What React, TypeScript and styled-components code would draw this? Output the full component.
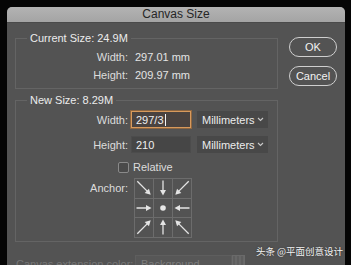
import React from "react"
import styled, { createGlobalStyle } from "styled-components"

const GlobalStyle = createGlobalStyle`
  html, body {
    margin: 0;
    padding: 0;
    background: #050505;
    overflow: hidden;
  }
  body {
    font-family: "Liberation Sans", Arial, sans-serif;
    font-size: 11px;
  }
`

const Screen = styled.div`
  width: 351px;
  height: 265px;
  padding: 7px 6px 0 7px;
  box-sizing: border-box;
  position: relative;
  overflow: hidden;
`

const Window = styled.div`
  width: 338px;
  height: 270px;
  background: #535353;
  border-radius: 5px 5px 0 0;
  overflow: hidden;
`

const TitleBar = styled.div`
  height: 15px;
  background: linear-gradient(#b3b3b3, #a4a4a4);
  color: #262626;
  font-size: 12px;
  line-height: 15px;
  text-align: center;
  border-bottom: 1px solid #4a4a4a;
`

const Body = styled.div`
  display: flex;
  gap: 11px;
  padding: 0 8px 0 8px;
`

const Main = styled.div`
  width: 263px;
  display: flex;
  flex-direction: column;
`

const Side = styled.div`
  display: flex;
  flex-direction: column;
  gap: 9px;
  padding-top: 14px;
`

const Group = styled.fieldset<{ $top: number }>`
  margin: ${(p) => p.$top}px 0 0 0;
  padding: 0;
  border: 1px solid #646464;
  min-width: 0;
`

const Legend = styled.legend`
  margin-left: 11px;
  padding: 0 3px;
  color: #ececec;
  line-height: 13px;
  font-size: 11px;
`

const Rows = styled.div<{ $pt: number; $pb: number }>`
  display: flex;
  flex-direction: column;
  padding: ${(p) => p.$pt}px 0 ${(p) => p.$pb}px 0;
`

const Row = styled.div<{ $h: number; $mt?: number }>`
  display: flex;
  align-items: center;
  height: ${(p) => p.$h}px;
  margin-top: ${(p) => p.$mt ?? 0}px;
`

const Label = styled.div<{ $dim?: boolean }>`
  width: 112px;
  text-align: right;
  white-space: nowrap;
  color: ${(p) => (p.$dim ? "#767676" : "#dcdcdc")};
  flex-shrink: 0;
`

const Value = styled.div`
  margin-left: 7px;
  color: #e4e4e4;
`

const Field = styled.div<{ $focus?: boolean }>`
  margin-left: 3px;
  width: 60px;
  height: 17px;
  box-sizing: border-box;
  padding-left: 4px;
  display: flex;
  align-items: center;
  color: #f0f0f0;
  background: ${(p) => (p.$focus ? "#4a4340" : "#464646")};
  border: 1px solid ${(p) => (p.$focus ? "#d89a5c" : "#4c4c4c")};
  box-shadow: ${(p) => (p.$focus ? "0 0 0 1px #8e6640" : "none")};
`

const Caret = styled.span`
  display: inline-block;
  width: 1px;
  height: 12px;
  background: #f4f4f4;
  margin-left: 1px;
`

const Select = styled.div`
  margin-left: 6px;
  width: 71px;
  height: 17px;
  box-sizing: border-box;
  padding: 0 4px 0 5px;
  display: flex;
  align-items: center;
  justify-content: space-between;
  background: #484848;
  color: #ececec;
`

const CheckRow = styled.div`
  display: flex;
  align-items: center;
  gap: 4px;
  height: 14px;
  margin-top: 7px;
  padding-left: 102px;
  color: #dcdcdc;
`

const Checkbox = styled.span`
  width: 9px;
  height: 9px;
  border: 1px solid #8a8a8a;
  border-radius: 2px;
  background: #4a4a4a;
`

const AnchorRow = styled.div`
  display: flex;
  align-items: flex-start;
  margin-top: 4px;
`

const AnchorLabel = styled(Label)`
  padding-top: 4px;
`

const AnchorGrid = styled.div`
  margin-left: 6px;
  display: grid;
  grid-template-columns: repeat(3, 19px);
  grid-template-rows: repeat(3, 19.5px);
  border-top: 1px solid #6c6c6c;
  border-left: 1px solid #6c6c6c;
`

const AnchorCell = styled.div`
  border-right: 1px solid #6c6c6c;
  border-bottom: 1px solid #6c6c6c;
  display: flex;
  align-items: center;
  justify-content: center;
`

const PillButton = styled.div`
  width: 48px;
  height: 20px;
  box-sizing: border-box;
  border: 1px solid #cfcfcf;
  border-radius: 10px;
  display: flex;
  align-items: center;
  justify-content: center;
  color: #f2f2f2;
  font-size: 11px;
`

const BottomRow = styled.div`
  display: flex;
  align-items: flex-start;
  margin-top: 13px;
  padding-left: 1px;
`

const BottomLabel = styled(Label)`
  padding-top: 3px;
`

const BgSelect = styled.div`
  margin-left: 7px;
  width: 97px;
  height: 18px;
  box-sizing: border-box;
  padding: 2px 5px;
  background: #575757;
  border: 1px solid #5e5e5e;
  color: #7c7c7c;
`

const Swatch = styled.div`
  width: 13px;
  height: 18px;
  box-sizing: border-box;
  border: 1px solid #6a6a6a;
  background: repeating-linear-gradient(90deg, #5e5e5e 0 2px, #676767 2px 4px);
`

const Watermark = styled.div`
  position: absolute;
  right: 8px;
  bottom: 8px;
  color: #f4f4f4;
  font-family: "Noto Sans CJK SC", sans-serif;
  font-size: 9.5px;
  line-height: 12px;
  text-shadow: 0 0 2px rgba(0, 0, 0, 0.5);
`

const Chevron = () => (
  <svg width="7" height="5" viewBox="0 0 7 5">
    <path d="M1 1 L3.5 3.5 L6 1" stroke="#c8c8c8" strokeWidth="1.1" fill="none" />
  </svg>
)

const Arrow = ({ dx, dy }: { dx: number; dy: number }) => {
  if (dx === 0 && dy === 0) {
    return (
      <svg width="18" height="18" viewBox="-9 -9 18 18">
        <circle r="2.8" fill="#e6e6e6" />
      </svg>
    )
  }
  const angle = (Math.atan2(dy, dx) * 180) / Math.PI
  const diag = dx !== 0 && dy !== 0
  const len = diag ? 9.5 : 7.5
  return (
    <svg width="18" height="18" viewBox="-9 -9 18 18">
      <g transform={`rotate(${angle})`}>
        <line x1={-len} y1="0" x2={len - 4} y2="0" stroke="#e4e4e4" strokeWidth="1.3" />
        <path d={`M${len} 0 L${len - 5.5} -3 L${len - 5.5} 3 Z`} fill="#e4e4e4" />
      </g>
    </svg>
  )
}

const cells = [0, 1, 2, 3, 4, 5, 6, 7, 8]

export default function App() {
  return (
    <>
      <GlobalStyle />
      <Screen>
        <Window>
          <TitleBar>Canvas Size</TitleBar>
          <Body>
            <Main>
              <Group $top={9}>
                <Legend>Current Size: 24.9M</Legend>
                <Rows $pt={3} $pb={4}>
                  <Row $h={18}>
                    <Label>Width:</Label>
                    <Value>297.01 mm</Value>
                  </Row>
                  <Row $h={18}>
                    <Label>Height:</Label>
                    <Value>209.97 mm</Value>
                  </Row>
                </Rows>
              </Group>
              <Group $top={5}>
                <Legend>New Size: 8.29M</Legend>
                <Rows $pt={4} $pb={3}>
                  <Row $h={17}>
                    <Label>Width:</Label>
                    <Field $focus>
                      297/3
                      <Caret />
                    </Field>
                    <Select>
                      Millimeters
                      <Chevron />
                    </Select>
                  </Row>
                  <Row $h={17} $mt={8}>
                    <Label>Height:</Label>
                    <Field>210</Field>
                    <Select>
                      Millimeters
                      <Chevron />
                    </Select>
                  </Row>
                  <CheckRow>
                    <Checkbox />
                    Relative
                  </CheckRow>
                  <AnchorRow>
                    <AnchorLabel>Anchor:</AnchorLabel>
                    <AnchorGrid>
                      {cells.map((i) => (
                        <AnchorCell key={i}>
                          <Arrow dx={1 - (i % 3)} dy={1 - Math.floor(i / 3)} />
                        </AnchorCell>
                      ))}
                    </AnchorGrid>
                  </AnchorRow>
                </Rows>
              </Group>
              <BottomRow>
                <BottomLabel $dim>Canvas extension color:</BottomLabel>
                <BgSelect>Background</BgSelect>
                <Swatch />
              </BottomRow>
            </Main>
            <Side>
              <PillButton>OK</PillButton>
              <PillButton>Cancel</PillButton>
            </Side>
          </Body>
        </Window>
        <Watermark>头条 @平面创意设计</Watermark>
      </Screen>
    </>
  )
}
